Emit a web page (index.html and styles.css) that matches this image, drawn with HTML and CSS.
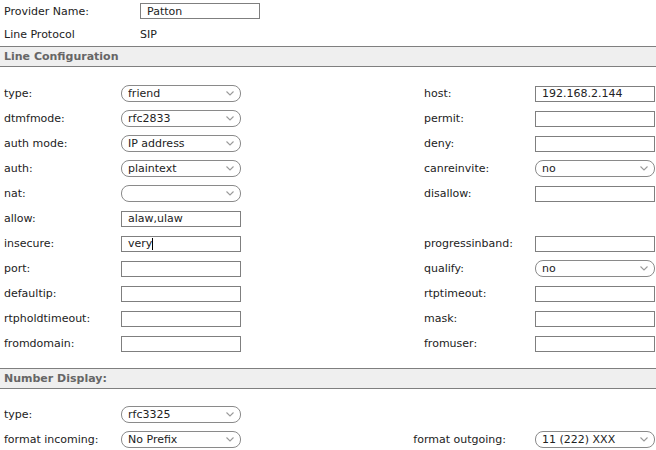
FILE: index.html
```html
<!DOCTYPE html>
<html lang="en">
<head>
  <meta charset="UTF-8" />
  <title>Line Settings</title>
  <link rel="stylesheet" href="styles.css">
</head>
<body>
  <div class="top">
    <label>Provider Name:</label>
    <input type="text" class="box" value="Patton" />
    <label>Line Protocol</label>
    <span class="value">SIP</span>
  </div>

  <div class="section-head">Line Configuration</div>

  <div class="grid">
    <label>type:</label>
    <span class="pick"><select><option>friend</option></select><svg viewBox="0 0 8 5"><path d="M0.5 0.5 L4 4 L7.5 0.5" /></svg></span>
    <label class="rlabel">host:</label>
    <input type="text" class="box" value="192.168.2.144" />

    <label>dtmfmode:</label>
    <span class="pick"><select><option>rfc2833</option></select><svg viewBox="0 0 8 5"><path d="M0.5 0.5 L4 4 L7.5 0.5" /></svg></span>
    <label class="rlabel">permit:</label>
    <input type="text" class="box" />

    <label>auth mode:</label>
    <span class="pick"><select><option>IP address</option></select><svg viewBox="0 0 8 5"><path d="M0.5 0.5 L4 4 L7.5 0.5" /></svg></span>
    <label class="rlabel">deny:</label>
    <input type="text" class="box" />

    <label>auth:</label>
    <span class="pick"><select><option>plaintext</option></select><svg viewBox="0 0 8 5"><path d="M0.5 0.5 L4 4 L7.5 0.5" /></svg></span>
    <label class="rlabel">canreinvite:</label>
    <span class="pick"><select><option>no</option></select><svg viewBox="0 0 8 5"><path d="M0.5 0.5 L4 4 L7.5 0.5" /></svg></span>

    <label>nat:</label>
    <span class="pick"><select><option></option></select><svg viewBox="0 0 8 5"><path d="M0.5 0.5 L4 4 L7.5 0.5" /></svg></span>
    <label class="rlabel">disallow:</label>
    <input type="text" class="box" />

    <label>allow:</label>
    <input type="text" class="box" value="alaw,ulaw" />

    <label>insecure:</label>
    <span class="box caret-box">very<i class="caret"></i></span>
    <label class="rlabel">progressinband:</label>
    <input type="text" class="box" />

    <label>port:</label>
    <input type="text" class="box" />
    <label class="rlabel">qualify:</label>
    <span class="pick"><select><option>no</option></select><svg viewBox="0 0 8 5"><path d="M0.5 0.5 L4 4 L7.5 0.5" /></svg></span>

    <label>defaultip:</label>
    <input type="text" class="box" />
    <label class="rlabel">rtptimeout:</label>
    <input type="text" class="box" />

    <label>rtpholdtimeout:</label>
    <input type="text" class="box" />
    <label class="rlabel">mask:</label>
    <input type="text" class="box" />

    <label>fromdomain:</label>
    <input type="text" class="box" />
    <label class="rlabel">fromuser:</label>
    <input type="text" class="box" />
  </div>

  <div class="section-head">Number Display:</div>

  <div class="grid numbers">
    <label>type:</label>
    <span class="pick"><select><option>rfc3325</option></select><svg viewBox="0 0 8 5"><path d="M0.5 0.5 L4 4 L7.5 0.5" /></svg></span>

    <label>format incoming:</label>
    <span class="pick"><select><option>No Prefix</option></select><svg viewBox="0 0 8 5"><path d="M0.5 0.5 L4 4 L7.5 0.5" /></svg></span>
    <label class="rlabel wide">format outgoing:</label>
    <span class="pick"><select><option>11 (222) XXX</option></select><svg viewBox="0 0 8 5"><path d="M0.5 0.5 L4 4 L7.5 0.5" /></svg></span>
  </div>
</body>
</html>
```

FILE: styles.css
```css
body {
  margin: 0;
  padding: 0;
  background: #ffffff;
  font-family: "DejaVu Sans", Verdana, sans-serif;
  font-size: 11px;
  color: #222222;
}

label {
  white-space: nowrap;
}

.top {
  display: grid;
  grid-template-columns: 136px 120px;
  grid-template-rows: 22px 24px;
  align-items: center;
  padding: 0 0 0 4px;
}

.section-head {
  height: 19px;
  line-height: 19px;
  border-top: 1px solid #7f7f7f;
  border-bottom: 1px solid #7f7f7f;
  background: #efefef;
  color: #666666;
  font-weight: bold;
  padding-left: 4px;
}

.grid {
  display: grid;
  grid-template-columns: 117px 120px 183px 111px 120px;
  grid-auto-rows: 25px;
  align-items: center;
  padding: 14px 0 12px 4px;
}

.grid > label {
  grid-column: 1;
}

.grid > .rlabel {
  grid-column: 4;
}

.grid.numbers {
  padding-top: 13px;
  padding-bottom: 0;
}

.grid > .rlabel.wide {
  grid-column: 3 / 5;
  justify-self: end;
  padding-right: 29px;
}

.box {
  box-sizing: border-box;
  width: 120px;
  height: 16px;
  margin: 0;
  padding: 0 6px;
  border: 1px solid #7f7f7f;
  background: #fff;
  font-family: inherit;
  font-size: 11px;
  color: #222;
  outline: none;
}

.caret-box {
  display: flex;
  align-items: center;
  line-height: 14px;
}

.caret {
  display: inline-block;
  width: 1px;
  height: 12px;
  background: #000;
}

.pick {
  box-sizing: border-box;
  display: flex;
  align-items: center;
  width: 120px;
  height: 17px;
  border: 1px solid #8a8a8a;
  border-radius: 8px;
  background: #fff;
  padding: 0 6px;
}

.pick select {
  flex: 1;
  min-width: 0;
  appearance: none;
  -webkit-appearance: none;
  border: none;
  background: transparent;
  padding: 0;
  margin: 0;
  font-family: inherit;
  font-size: 11px;
  color: #222;
  outline: none;
}

.pick svg {
  width: 8px;
  height: 5px;
  fill: none;
  stroke: #9a9a9a;
  stroke-width: 1.1;
}
```
